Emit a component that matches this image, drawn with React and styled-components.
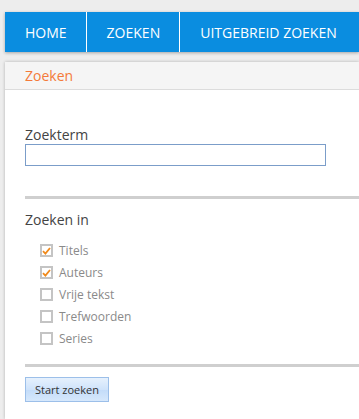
import React, { useState } from 'react';
import styled, { createGlobalStyle } from 'styled-components';

const GlobalStyle = createGlobalStyle`
  html, body {
    margin: 0;
    padding: 0;
    background: #ededed;
    font-family: 'Open Sans', 'Liberation Sans', sans-serif;
  }
`;

const Page = styled.div`
  display: flex;
  flex-direction: column;
  height: 100vh;
  box-sizing: border-box;
  padding: 12px 0 0 5px;
  overflow: hidden;
`;

const Nav = styled.nav`
  display: flex;
  flex-shrink: 0;
  height: 40px;
  background: #0a8de0;
  box-shadow: 0 1px 3px rgba(0, 0, 0, 0.3);
`;

const NavItem = styled.a`
  display: flex;
  align-items: center;
  padding: 0 19px 0 20px;
  color: #fff;
  font-size: 14px;
  white-space: nowrap;
  border-right: 1px solid #fff;
  &:last-child {
    border-right: none;
  }
`;

const Panel = styled.section`
  flex: 1;
  margin-top: 10px;
  background: #fff;
  box-shadow: 0 0 3px rgba(0, 0, 0, 0.25);
`;

const PanelHeader = styled.header`
  height: 27px;
  line-height: 27px;
  padding-left: 20px;
  background: #f5f5f5;
  border-bottom: 1px solid #dcdcdc;
  color: #f47a3a;
  font-size: 14px;
`;

const PanelBody = styled.div`
  padding: 0 0 0 20px;
`;

const Field = styled.div`
  padding-top: 36px;
  padding-bottom: 30px;
`;

const Label = styled.div`
  font-size: 14px;
  color: #444;
  line-height: 18px;
`;

const TextInput = styled.input`
  display: block;
  box-sizing: border-box;
  width: 301px;
  height: 22px;
  margin: 0;
  border: 1px solid #7b9dc9;
  padding: 0 6px;
  font-size: 13px;
  outline: none;
`;

const Rule = styled.hr`
  margin: 0;
  border: none;
  height: 3px;
  background: #cfcfcf;
`;

const Group = styled.div`
  padding-top: 12px;
  padding-bottom: 19px;
`;

const CheckList = styled.ul`
  list-style: none;
  margin: 15px 0 0 0;
  padding: 0 0 0 15px;
  display: flex;
  flex-direction: column;
  gap: 9px;
`;

const CheckRow = styled.li`
  display: flex;
  align-items: center;
  gap: 6px;
  height: 13px;
  font-size: 12px;
  color: #8a8a8a;
`;

const Box = styled.span`
  box-sizing: border-box;
  width: 13px;
  height: 13px;
  border: 2px solid #c4c4c4;
  background: #fff;
  display: flex;
  align-items: center;
  justify-content: center;
`;

const Button = styled.button`
  margin-top: 10px;
  width: 84px;
  height: 25px;
  border: 1px solid #9cbfe9;
  background: linear-gradient(#e6f1fd, #cfe3fb 50%, #c3dcf9 51%, #d6e8fc);
  font-family: 'Open Sans', 'Liberation Sans', sans-serif;
  font-size: 11px;
  color: #333;
  padding: 0;
`;

const Check = () => (
  <svg width="9" height="8" viewBox="0 0 9 8">
    <path d="M1 4.2 L3.4 6.6 L8 1" fill="none" stroke="#f08a1c" strokeWidth="1.8" />
  </svg>
);

const options = [
  { label: 'Titels', checked: true },
  { label: 'Auteurs', checked: true },
  { label: 'Vrije tekst', checked: false },
  { label: 'Trefwoorden', checked: false },
  { label: 'Series', checked: false },
];

const App = () => {
  const [term, setTerm] = useState('');
  return (
    <>
      <GlobalStyle />
      <Page>
        <Nav>
          <NavItem>HOME</NavItem>
          <NavItem>ZOEKEN</NavItem>
          <NavItem>UITGEBREID ZOEKEN</NavItem>
        </Nav>
        <Panel>
          <PanelHeader>Zoeken</PanelHeader>
          <PanelBody>
            <Field>
              <Label>Zoekterm</Label>
              <TextInput value={term} onChange={e => setTerm(e.target.value)} autoFocus />
            </Field>
            <Rule />
            <Group>
              <Label>Zoeken in</Label>
              <CheckList>
                {options.map(o => (
                  <CheckRow key={o.label}>
                    <Box>{o.checked && <Check />}</Box>
                    {o.label}
                  </CheckRow>
                ))}
              </CheckList>
            </Group>
            <Rule />
            <Button>Start zoeken</Button>
          </PanelBody>
        </Panel>
      </Page>
    </>
  );
};

export default App;
